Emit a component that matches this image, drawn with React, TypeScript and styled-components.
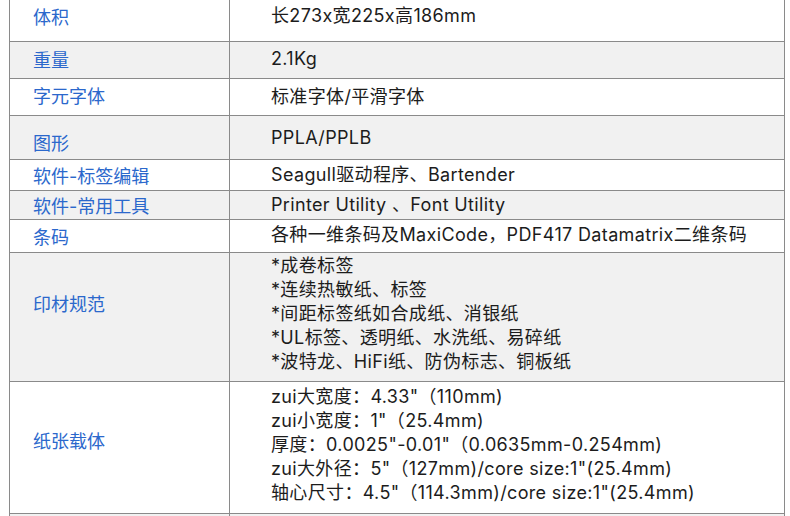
import React from "react";
import styled, { createGlobalStyle } from "styled-components";

const Global = createGlobalStyle`
  html, body { margin: 0; padding: 0; background: #ffffff; }
  body { overflow: hidden; }
`;

const Page = styled.div`
  width: 790px;
  height: 516px;
  overflow: hidden;
  background: #fff;
  font-family: Inter, "Noto Sans CJK SC", sans-serif;
  font-size: 18px;
`;

const Table = styled.div`
  margin: -9px 0 0 9px;
  width: 776px;
  display: grid;
  grid-template-columns: 220px 555px;
  border-left: 1px solid #8a8a8a;
`;

const Cell = styled.div<{ $h: number; $shade: boolean; $nudge?: number }>`
  box-sizing: border-box;
  height: ${(p) => p.$h}px;
  background: ${(p) => (p.$shade ? "#f1f1f1" : "#ffffff")};
  border-bottom: 1px solid #8a8a8a;
  border-right: 1px solid #8a8a8a;
  display: flex;
  align-items: center;
  white-space: nowrap;
  padding-top: ${(p) => Math.max(0, 2 * (p.$nudge ?? 0))}px;
  padding-bottom: ${(p) => Math.max(0, -2 * (p.$nudge ?? 0))}px;
`;

const Label = styled(Cell)`
  padding-left: 23px;
  color: #2b68cc;
`;

const Value = styled(Cell)`
  padding-left: 41px;
  color: #1c1c1c;
  letter-spacing: 0.35px;
`;

const Lines = styled.div`
  display: flex;
  flex-direction: column;
  line-height: 24px;
`;

type Row = {
  label: string;
  lines: string[];
  h: number;
  ln?: number;
  vn?: number;
};

const rows: Row[] = [
  { label: "体积", lines: ["长273x宽225x高186mm"], h: 51 },
  { label: "重量", lines: ["2.1Kg"], h: 37, ln: -1, vn: -1 },
  { label: "字元字体", lines: ["标准字体/平滑字体"], h: 37, ln: -2.5 },
  { label: "图形", lines: ["PPLA/PPLB"], h: 44, ln: 4 },
  { label: "软件-标签编辑", lines: ["Seagull驱动程序、Bartender"], h: 31 },
  { label: "软件-常用工具", lines: ["Printer Utility 、Font Utility"], h: 29 },
  {
    label: "条码",
    lines: ["各种一维条码及MaxiCode，PDF417 Datamatrix二维条码"],
    h: 33,
    vn: -1,
  },
  {
    label: "印材规范",
    lines: [
      "*成卷标签",
      "*连续热敏纸、标签",
      "*间距标签纸如合成纸、消银纸",
      "*UL标签、透明纸、水洗纸、易碎纸",
      "*波特龙、HiFi纸、防伪标志、铜板纸",
    ],
    h: 129,
    ln: -14,
    vn: -3.5,
  },
  {
    label: "纸张载体",
    lines: [
      "zui大宽度：4.33\"（110mm)",
      "zui小宽度：1\"（25.4mm)",
      "厚度：0.0025\"-0.01\"（0.0635mm-0.254mm)",
      "zui大外径：5\"（127mm)/core size:1\"(25.4mm)",
      "轴心尺寸：4.5\"（114.3mm)/core size:1\"(25.4mm)",
    ],
    h: 132,
    ln: -8,
    vn: -3,
  },
  { label: "", lines: [""], h: 30 },
];

export default function App() {
  return (
    <Page>
      <Global />
      <Table>
        {rows.map((r, i) => (
          <React.Fragment key={i}>
            <Label $h={r.h} $shade={i % 2 === 1} $nudge={r.ln}>
              {r.label}
            </Label>
            <Value $h={r.h} $shade={i % 2 === 1} $nudge={r.vn}>
              <Lines>
                {r.lines.map((l, j) => (
                  <span key={j}>{l}</span>
                ))}
              </Lines>
            </Value>
          </React.Fragment>
        ))}
      </Table>
    </Page>
  );
}
